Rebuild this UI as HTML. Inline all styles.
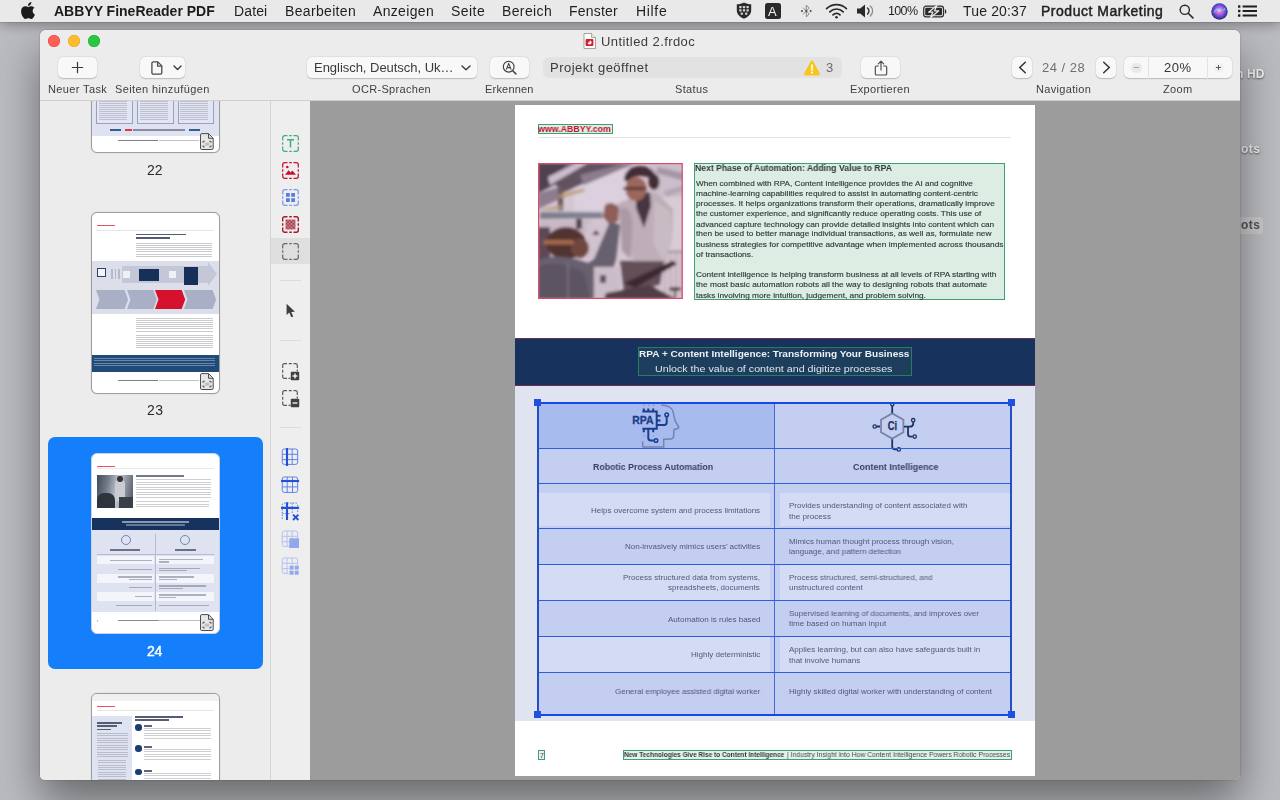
<!DOCTYPE html>
<html lang="de"><head><meta charset="utf-8"><title>ABBYY FineReader PDF – Untitled 2.frdoc</title>
<style>
html,body{margin:0;padding:0}
body{width:1280px;height:800px;overflow:hidden;position:relative;background:#a9aaae;font-family:"Liberation Sans",sans-serif;color:#2b2b2b}
div,span,svg{position:absolute;box-sizing:border-box}
.t{white-space:nowrap;line-height:1;display:block;will-change:transform}
#desktop{left:0;top:0;width:1280px;height:800px;background:#bbbcc0}
#menubar{left:0;top:0;width:1280px;height:22px;background:#e9e9e9;box-shadow:0 1px 0 rgba(0,0,0,.10),0 2px 14px rgba(0,0,0,.36);color:#1f1f1f}
#winshadow{left:40px;top:30px;width:1200px;height:750px;border-radius:6px;box-shadow:0 22px 45px rgba(0,0,0,.44),0 0 1.500px rgba(0,0,0,.45)}
#window{left:40px;top:30px;width:1200px;height:750px;border-radius:6px 6px 5px 5px;overflow:hidden;background:#ececec}
#toolbar{left:0;top:0;width:1200px;height:71px;background:#ececec;border-bottom:1px solid #cfcfcf}
#sidebar{left:0;top:71px;width:231px;height:679px;background:#ececec;border-right:1px solid #d4d4d4;overflow:hidden}
#tools{left:231px;top:71px;width:39px;height:679px;background:#eeeeee}
#main{left:270px;top:71px;width:930px;height:679px;background:#9c9c9c;overflow:hidden}
#page{left:205px;top:3.5px;width:520px;height:671px;background:#fff}
.btn{background:#f8f8f8;border-radius:5px;box-shadow:0 0 0 .5px rgba(0,0,0,.045),0 .6px 1.200px rgba(0,0,0,.2)}
.lbl{color:#3a3a3a}
#page .t{filter:blur(.3px)}

</style></head>
<body>
<div id="desktop">
<div style="left:1234px;top:217px;width:29px;height:16.5px;background:rgba(205,205,207,.85);border-radius:3px"></div>
<span class="t" id="t0" style="left:1235.78px;top:68.00px;font-size:12px;font-weight:700;color:#f4f4f4;letter-spacing:0.133px;text-shadow:0 1px 2px rgba(0,0,0,.55);">n HD</span>
<span class="t" id="t1" style="left:1240.58px;top:143.00px;font-size:12px;font-weight:700;color:#f4f4f4;letter-spacing:0.450px;text-shadow:0 1px 2px rgba(0,0,0,.55);">ots</span>
<span class="t" id="t2" style="left:1240.58px;top:219.00px;font-size:12px;font-weight:700;color:#555;letter-spacing:0.450px;">ots</span>
</div>
<div id="winshadow"></div>
<div id="menubar">
<svg style="left:20.5px;top:2px" width="14" height="17" viewBox="0 0 814 1000"><path fill="#1d1d1d" d="M788 341c-6 4-108 62-108 190 0 149 131 201 135 203-1 3-21 72-69 142-43 62-88 124-156 124s-86-40-165-40c-77 0-104 41-167 41s-106-57-156-128C44 790 0 663 0 543c0-194 126-296 250-296 66 0 121 43 162 43 39 0 101-46 176-46 28 0 130 3 197 97zM555 160c31-37 53-88 53-139 0-7-1-14-2-20-50 2-110 33-146 75-28 32-55 83-55 135 0 8 1 16 2 18 3 1 8 1 13 1 45 0 102-30 135-70z"/></svg>
<span class="t" id="t3" style="left:54.16px;top:4.00px;font-size:14px;font-weight:700;color:#1b1b1b;letter-spacing:-0.004px;">ABBYY FineReader PDF</span>
<span class="t" id="t4" style="left:233.66px;top:4.00px;font-size:14px;color:#1f1f1f;letter-spacing:0.128px;">Datei</span>
<span class="t" id="t5" style="left:285.16px;top:4.00px;font-size:14px;color:#1f1f1f;letter-spacing:0.331px;">Bearbeiten</span>
<span class="t" id="t6" style="left:373.16px;top:4.00px;font-size:14px;color:#1f1f1f;letter-spacing:0.330px;">Anzeigen</span>
<span class="t" id="t7" style="left:451.16px;top:4.00px;font-size:14px;color:#1f1f1f;letter-spacing:0.445px;">Seite</span>
<span class="t" id="t8" style="left:502.16px;top:4.00px;font-size:14px;color:#1f1f1f;letter-spacing:0.372px;">Bereich</span>
<span class="t" id="t9" style="left:569.16px;top:4.00px;font-size:14px;color:#1f1f1f;letter-spacing:0.205px;">Fenster</span>
<span class="t" id="t10" style="left:636.16px;top:4.00px;font-size:14px;color:#1f1f1f;letter-spacing:0.671px;">Hilfe</span>
<svg style="left:735.5px;top:2px" width="16" height="17" viewBox="0 0 16 17"><path d="M8 .4c2 1.2 4.6 1.8 7.2 1.9v5.9c0 4-2.800 6.800-7.200 8.500C3.600 15 .8 12.200.8 8.200V2.300C3.400 2.200 6 1.600 8 .4z" fill="#2a2a2a"/><g fill="#dcdcdc"><rect x="3.300" y="4" width="2.200" height="2.200" rx=".4"/><rect x="6.900" y="4" width="2.200" height="2.200" rx=".4"/><rect x="10.500" y="4" width="2.200" height="2.200" rx=".4"/><rect x="3.300" y="7.300" width="2.200" height="2.200" rx=".4"/><rect x="6.900" y="7.300" width="2.200" height="2.200" rx=".4"/><rect x="10.500" y="7.300" width="2.200" height="2.200" rx=".4"/><rect x="4.700" y="10.600" width="2.200" height="2.200" rx=".4"/><rect x="9.100" y="10.600" width="2.200" height="2.200" rx=".4"/></g></svg>
<div style="left:765px;top:3px;width:16px;height:16px;background:#2a2a2a;border-radius:2.5px"></div>
<span class="t" id="t11" style="left:768.22px;top:5.00px;font-size:13px;color:#f2f2f2;letter-spacing:-0.022px;">A</span>
<svg style="left:799px;top:3px" width="15" height="16" viewBox="0 0 15 16"><path d="M4 4.700l6.200 6.200L7.300 14V2l2.900 3.100L4 11.300" fill="none" stroke="#8a8a8a" stroke-width="1" stroke-linejoin="round"/><circle cx="3" cy="8" r="1" fill="#444"/><circle cx="7.300" cy="8" r="1" fill="#444"/><circle cx="11.600" cy="8" r="1" fill="#444"/></svg>
<svg style="left:825px;top:3px" width="23" height="16" viewBox="0 0 23 16"><g fill="none" stroke="#2a2a2a" stroke-width="1.700" stroke-linecap="round"><path d="M1.600 5.600C4.300 3 7.700 1.600 11.500 1.600s7.200 1.400 9.900 4"/><path d="M4.800 8.800c1.800-1.800 4.100-2.800 6.700-2.800s4.900 1 6.700 2.800"/><path d="M8 11.800c.9-.9 2.100-1.500 3.500-1.500s2.600.6 3.500 1.500"/></g><circle cx="11.500" cy="14.300" r="1.300" fill="#2a2a2a"/></svg>
<svg style="left:856px;top:3px" width="19" height="16" viewBox="0 0 19 16"><path d="M1 5.500h3.200L9 1.500v13l-4.800-4H1z" fill="#2a2a2a"/><path d="M11.500 5c1 .8 1.500 1.800 1.500 3s-.5 2.200-1.500 3" fill="none" stroke="#2a2a2a" stroke-width="1.300" stroke-linecap="round"/><path d="M14.300 3c1.500 1.300 2.300 3 2.300 5s-.8 3.700-2.300 5" fill="none" stroke="#8a8a8a" stroke-width="1.300" stroke-linecap="round"/></svg>
<span class="t" id="t12" style="left:887.65px;top:5.00px;font-size:12.5px;color:#1f1f1f;letter-spacing:-0.653px;">100%</span>
<svg style="left:923px;top:4.500px" width="24" height="13" viewBox="0 0 24 13"><rect x=".7" y="1.200" width="19.800" height="10.600" rx="2.300" fill="none" stroke="#2a2a2a" stroke-width="1.200"/><path d="M21.900 4.300c1 .3 1.400 1.100 1.400 2.200s-.4 1.900-1.400 2.200z" fill="#2a2a2a"/><rect x="2.200" y="2.700" width="16.800" height="7.600" rx="1" fill="#2a2a2a"/><path d="M13.800 .6L5.600 7.200h4.300L7.600 12.400l8.200-6.600h-4.300z" fill="#2a2a2a" stroke="#e9e9e9" stroke-width="1.300" stroke-linejoin="round"/></svg>
<span class="t" id="t13" style="left:963.36px;top:4.00px;font-size:14px;color:#1f1f1f;letter-spacing:0.159px;">Tue 20:37</span>
<span class="t" id="t14" style="left:1040.66px;top:4.00px;font-size:14px;color:#222;letter-spacing:0.518px;-webkit-text-stroke:.45px #222;">Product Marketing</span>
<svg style="left:1179px;top:3.500px" width="15" height="15" viewBox="0 0 15 15"><circle cx="5.800" cy="5.800" r="4.600" fill="none" stroke="#2a2a2a" stroke-width="1.400"/><path d="M9.200 9.200l4.700 4.700" stroke="#2a2a2a" stroke-width="1.600" stroke-linecap="round"/></svg>
<svg style="left:1210.500px;top:2.500px" width="17" height="17" viewBox="0 0 17 17"><defs><radialGradient id="siri" cx=".5" cy=".45" r=".6"><stop offset="0" stop-color="#f3e6ff"/><stop offset=".3" stop-color="#c46be8"/><stop offset=".6" stop-color="#5a4fd8"/><stop offset="1" stop-color="#1a1a4a"/></radialGradient></defs><circle cx="8.500" cy="8.500" r="8.200" fill="url(#siri)"/><path d="M3 9.500c2-3 3.500-4.500 5.500-2.500s3.500 1 5.500-1.500" fill="none" stroke="#5ee0ff" stroke-width="1.300" opacity=".85"/><path d="M3.500 8c2 1 3.500 3.500 5.500 1.500s3-2.500 4.500-2" fill="none" stroke="#ff5ea8" stroke-width="1.200" opacity=".8"/></svg>
<svg style="left:1238px;top:5px" width="19" height="12" viewBox="0 0 19 12"><g fill="#1f1f1f"><rect x="0" y=".3" width="2.400" height="2.400" rx=".5"/><rect x="4.600" y=".5" width="14.400" height="2"/><rect x="0" y="4.800" width="2.400" height="2.400" rx=".5"/><rect x="4.600" y="5" width="14.400" height="2"/><rect x="0" y="9.300" width="2.400" height="2.400" rx=".5"/><rect x="4.600" y="9.500" width="14.400" height="2"/></g></svg>
</div>
<div id="window">
<div id="toolbar">
<div style="left:7.8px;top:4.9px;width:12.4px;height:12.4px;background:#fe5f57;border-radius:50%;box-shadow:inset 0 0 0 .5px #e2463f"></div>
<div style="left:27.8px;top:4.9px;width:12.4px;height:12.4px;background:#febc2e;border-radius:50%;box-shadow:inset 0 0 0 .5px #dfa023"></div>
<div style="left:47.8px;top:4.9px;width:12.4px;height:12.4px;background:#28c840;border-radius:50%;box-shadow:inset 0 0 0 .5px #1dad2b"></div>
<svg style="left:543px;top:3px" width="13" height="16" viewBox="0 0 13 16"><path d="M1 .5h7.500L12.500 4.500V15.500H1z" fill="#fff" stroke="#8e8e8e" stroke-width=".8"/><path d="M8.500 .5V4.500h4" fill="#e8e8e8" stroke="#8e8e8e" stroke-width=".7"/><rect x="2.600" y="6" width="7.800" height="7" rx="1" fill="#d0202e"/><path d="M4.600 9.500a2 2 0 1 0 2-2v2z" fill="#fff"/></svg>
<span class="t" id="t15" style="left:561.12px;top:5.00px;font-size:13px;color:#3c3c3c;letter-spacing:0.421px;">Untitled 2.frdoc</span>
<div class="btn" style="left:18px;top:27px;width:39px;height:21px;"><svg style="left:13px;top:4px" width="13" height="13" viewBox="0 0 13 13"><path d="M6.500 1.300v10.400M1.300 6.500h10.400" stroke="#3a3a3a" stroke-width="1.200" stroke-linecap="round"/></svg></div>
<div class="btn" style="left:100px;top:27px;width:45px;height:21px;"><svg style="left:11px;top:3.500px" width="12" height="14" viewBox="0 0 12 14"><path d="M2.300 .9h4.500l4 4v6.800a1.400 1.400 0 0 1-1.400 1.400H2.300A1.400 1.400 0 0 1 .9 11.700V2.300A1.400 1.400 0 0 1 2.300 .9z" fill="none" stroke="#4a4a4a" stroke-width="1.300" stroke-linejoin="round"/><path d="M6.600 1v4.100h4.100" fill="none" stroke="#4a4a4a" stroke-width="1.300" stroke-linejoin="round"/></svg><svg style="left:33px;top:8px" width="9" height="6" viewBox="0 0 9 6"><path d="M1 1l3.500 3.500L8 1" fill="none" stroke="#3a3a3a" stroke-width="1.400" stroke-linecap="round" stroke-linejoin="round"/></svg></div>
<div class="btn" style="left:267px;top:27px;width:170px;height:21px;"><svg style="left:154px;top:8px" width="10" height="6" viewBox="0 0 10 6"><path d="M1 1l4 3.800L9 1" fill="none" stroke="#3a3a3a" stroke-width="1.400" stroke-linecap="round" stroke-linejoin="round"/></svg></div>
<span class="t" id="t16" style="left:274.42px;top:31.00px;font-size:13px;color:#3a3a3a;letter-spacing:-0.034px;">Englisch, Deutsch, Uk…</span>
<div class="btn" style="left:450px;top:27px;width:39px;height:21px;"><svg style="left:12px;top:3px" width="15" height="15" viewBox="0 0 15 15"><circle cx="6.700" cy="6.700" r="5.400" fill="none" stroke="#444" stroke-width="1.200"/><path d="M10.700 10.700l3.200 3.200" stroke="#444" stroke-width="1.500" stroke-linecap="round"/><path d="M4.300 9.600L6.700 3.400l2.400 6.200M5.200 7.600h3" fill="none" stroke="#444" stroke-width="1.100" stroke-linejoin="round"/></svg></div>
<div style="left:502.5px;top:26.6px;width:299.5px;height:21.8px;background:#e2e2e2;border-radius:6px"></div>
<span class="t" id="t17" style="left:509.82px;top:31.00px;font-size:13px;color:#3a3a3a;letter-spacing:0.481px;">Projekt geöffnet</span>
<svg style="left:763px;top:29px" width="18" height="18" viewBox="0 0 18 18"><path d="M9 1.600c.6 0 1.100.3 1.400.9l6.300 11.700c.6 1.100-.1 2.300-1.400 2.300H2.700c-1.300 0-2-1.200-1.400-2.300L7.600 2.500c.3-.6.800-.9 1.400-.9z" fill="#f8c51c"/><path d="M9 6v5" stroke="#fff" stroke-width="1.700" stroke-linecap="round"/><circle cx="9" cy="13.600" r="1.050" fill="#fff"/></svg>
<span class="t" id="t18" style="left:786.22px;top:31.00px;font-size:13px;color:#6a6a6a;letter-spacing:0.216px;">3</span>
<div class="btn" style="left:821px;top:27px;width:39px;height:21px;"><svg style="left:12.500px;top:2.500px" width="14" height="16" viewBox="0 0 14 16"><path d="M4.300 6H2.600A1.300 1.300 0 0 0 1.300 7.300v6.400A1.300 1.300 0 0 0 2.600 15h8.800a1.300 1.300 0 0 0 1.300-1.300V7.300A1.300 1.300 0 0 0 11.400 6H9.700" fill="none" stroke="#4a4a4a" stroke-width="1.150" stroke-linecap="round"/><path d="M7 10V1.300M4.300 3.800L7 1.100l2.700 2.700" fill="none" stroke="#4a4a4a" stroke-width="1.150" stroke-linecap="round" stroke-linejoin="round"/></svg></div>
<div class="btn" style="left:972px;top:27px;width:20.3px;height:21px;"><svg style="left:5.500px;top:4px" width="9" height="13" viewBox="0 0 9 13"><path d="M7.300 1.200L1.700 6.500l5.600 5.300" fill="none" stroke="#333" stroke-width="1.500" stroke-linecap="round" stroke-linejoin="round"/></svg></div>
<span class="t" id="t19" style="left:1002.02px;top:31.00px;font-size:13px;color:#707070;letter-spacing:0.514px;">24 / 28</span>
<div class="btn" style="left:1056px;top:27px;width:20.3px;height:21px;"><svg style="left:6px;top:4px" width="9" height="13" viewBox="0 0 9 13"><path d="M1.700 1.200l5.600 5.300-5.600 5.300" fill="none" stroke="#333" stroke-width="1.500" stroke-linecap="round" stroke-linejoin="round"/></svg></div>
<div class="btn" style="left:1084px;top:27px;width:108px;height:21px;"><div style="left:24px;top:0;width:1px;height:21.500px;background:#e3e3e3"></div><div style="left:83px;top:0;width:1px;height:21.500px;background:#e3e3e3"></div><div style="left:7px;top:5.500px;width:10.500px;height:10.500px;border-radius:50%;background:#e9e9e9"></div><div style="left:9.700px;top:10.200px;width:5px;height:1.200px;background:#a4a4a4"></div><div style="left:89.500px;top:5.500px;width:10.500px;height:10.500px;border-radius:50%;background:#f0f0f0"></div><div style="left:92px;top:10.200px;width:5.400px;height:1.100px;background:#5c5c5c"></div><div style="left:94.150px;top:8.050px;width:1.100px;height:5.400px;background:#5c5c5c"></div></div>
<span class="t" id="t20" style="left:1123.92px;top:31.00px;font-size:13px;color:#333;letter-spacing:0.459px;">20%</span>
<span class="t" id="t21" style="left:7.64px;top:54.00px;font-size:11px;color:#404040;letter-spacing:0.379px;">Neuer Task</span>
<span class="t" id="t22" style="left:74.94px;top:54.00px;font-size:11px;color:#404040;letter-spacing:0.392px;">Seiten hinzufügen</span>
<span class="t" id="t23" style="left:312.14px;top:54.00px;font-size:11px;color:#404040;letter-spacing:0.322px;">OCR-Sprachen</span>
<span class="t" id="t24" style="left:444.64px;top:54.00px;font-size:11px;color:#404040;letter-spacing:0.194px;">Erkennen</span>
<span class="t" id="t25" style="left:634.94px;top:54.00px;font-size:11px;color:#404040;letter-spacing:0.352px;">Status</span>
<span class="t" id="t26" style="left:810.34px;top:54.00px;font-size:11px;color:#404040;letter-spacing:0.328px;">Exportieren</span>
<span class="t" id="t27" style="left:996.04px;top:54.00px;font-size:11px;color:#404040;letter-spacing:0.318px;">Navigation</span>
<span class="t" id="t28" style="left:1123.04px;top:54.00px;font-size:11px;color:#404040;letter-spacing:0.342px;">Zoom</span>
</div>
<div id="sidebar">
<div style="left:51px;top:-129.5px;width:128.5px;height:181.5px;background:#fff;border:1px solid #9d9d9d;border-radius:6px;overflow:hidden;box-shadow:0 0 1px rgba(0,0,0,.25)"><div style="left:0;top:0;width:128px;height:163.5px;background:#dfe2f0"></div><div style="left:4.4px;top:87.5px;width:36.2px;height:64px;border:1px solid #9aa1bd;background:#e3e6f2"></div><div style="left:6.9px;top:128.5px;width:27.7px;height:20px;opacity:0.341;background:repeating-linear-gradient(180deg,#6f7590 0,#6f7590 1.0px,transparent 1.0px,transparent 2.0px)"></div><div style="left:45.4px;top:87.5px;width:36.2px;height:64px;border:1px solid #9aa1bd;background:#e3e6f2"></div><div style="left:47.9px;top:128.5px;width:27.7px;height:20px;opacity:0.341;background:repeating-linear-gradient(180deg,#6f7590 0,#6f7590 1.0px,transparent 1.0px,transparent 2.0px)"></div><div style="left:85.6px;top:87.5px;width:36px;height:64px;border:1px solid #9aa1bd;background:#e3e6f2"></div><div style="left:88.1px;top:128.5px;width:27.5px;height:20px;opacity:0.341;background:repeating-linear-gradient(180deg,#6f7590 0,#6f7590 1.0px,transparent 1.0px,transparent 2.0px)"></div><div style="left:18px;top:156.8px;width:11px;height:1.600px;background:#2f5d94"></div><div style="left:97px;top:156.8px;width:11px;height:1.600px;background:#2f5d94"></div><div style="left:33px;top:156.6px;width:7px;height:1.800px;background:#e0344a"></div><div style="left:41px;top:156.8px;width:52px;height:1.500px;background:#70768c;opacity:.8"></div><div style="left:26px;top:167.1px;width:40px;height:1.200px;background:#555;opacity:.75"></div><div style="left:67px;top:167.1px;width:40px;height:1.200px;background:#999;opacity:.6"></div><svg style="left:107.5px;top:160.0px" width="14" height="17" viewBox="0 0 14 17"><path d="M1.800 .6h6.700l4.700 4.700v9.900a1.300 1.300 0 0 1-1.300 1.300H1.800A1.300 1.300 0 0 1 .5 15.200V1.900A1.300 1.300 0 0 1 1.800 .6z" fill="#e4e4e4" fill-opacity=".9" stroke="#4d4d4d" stroke-width="1"/><path d="M8.500 .8v4.500h4.500" fill="none" stroke="#4d4d4d" stroke-width="1"/><path d="M3 9.800V8.300h1.700M9.300 8.300H11v1.500M11 12.400v1.500H9.300M4.700 13.900H3v-1.500" fill="none" stroke="#4d4d4d" stroke-width="1"/><rect x="4.700" y="9.600" width="4.600" height="3" fill="#9a9a9a" opacity=".5"/></svg></div>
<span class="t" id="t29" style="left:106.76px;top:62.00px;font-size:14px;color:#2a2a2a;letter-spacing:-0.078px;">22</span>
<div style="left:51px;top:111px;width:128.5px;height:181.5px;background:#fff;border:1px solid #9d9d9d;border-radius:6px;overflow:hidden;box-shadow:0 0 1px rgba(0,0,0,.25)"><div style="left:4.9px;top:12px;width:17.9px;height:1.3px;background:#e0344a;opacity:.85"></div><div style="left:3.8px;top:16.5px;width:118.2px;height:0.5px;background:#e6e6e6;"></div><div style="left:43.5px;top:20.6px;width:50.8px;height:1.6px;background:#565c72;"></div><div style="left:43.5px;top:24px;width:34.5px;height:1.6px;background:#565c72;"></div><div style="left:43.5px;top:30px;width:76.5px;height:14.5px;opacity:0.46499999999999997;background:repeating-linear-gradient(180deg,#8d8f99 0,#8d8f99 1.0px,transparent 1.0px,transparent 2.1px)"></div><div style="left:-1px;top:48px;width:129px;height:52.5px;background:#dcdeea;"></div><div style="left:30px;top:52.5px;width:86px;height:17.5px;background:#c3c7d8;"></div><svg style="left:116px;top:49px" width="10" height="24" viewBox="0 0 10 24"><path d="M0 0l9 12-9 12z" fill="#c3c7d8"/></svg><div style="left:5px;top:55px;width:9px;height:9px;background:#f4f5f9;border:1px solid #2a436e"></div><div style="left:19px;top:56px;width:1.5px;height:10px;background:#b5bacd;"></div><div style="left:22.5px;top:56px;width:1.5px;height:10px;background:#b5bacd;"></div><div style="left:26px;top:56px;width:1.5px;height:10px;background:#b5bacd;"></div><div style="left:30.5px;top:57.5px;width:7px;height:7.5px;background:#f0f1f6;"></div><div style="left:47px;top:56px;width:20px;height:12px;background:#17305a;"></div><div style="left:76.5px;top:57.5px;width:7px;height:7.5px;background:#f0f1f6;"></div><div style="left:92px;top:53.7px;width:14.4px;height:18.6px;background:#17305a;"></div><svg style="left:4.4px;top:76.6px" width="32.6" height="19" viewBox="0 0 32.6 19"><path d="M0 0H28.6L32.1 9.500 28.6 19H0L3.500 9.500z" fill="#a9afc4"/></svg><svg style="left:35px;top:76.6px" width="30.3" height="19" viewBox="0 0 30.3 19"><path d="M0 0H26.3L29.8 9.500 26.3 19H0L3.500 9.500z" fill="#a9afc4"/></svg><svg style="left:63.3px;top:76.6px" width="30.7" height="19" viewBox="0 0 30.7 19"><path d="M0 0H26.7L30.2 9.500 26.7 19H0L3.500 9.500z" fill="#d6112e"/></svg><svg style="left:92px;top:76.6px" width="32.6" height="19" viewBox="0 0 32.6 19"><path d="M0 0H28.6L32.1 9.500 28.6 19H0L3.500 9.500z" fill="#a9afc4"/></svg><div style="left:43.5px;top:104.8px;width:77.5px;height:31.6px;opacity:0.46499999999999997;background:repeating-linear-gradient(180deg,#8d8f99 0,#8d8f99 1.0px,transparent 1.0px,transparent 2.1px)"></div><div style="left:43.5px;top:119.3px;width:77.5px;height:2.3px;background:#fff;"></div><div style="left:-1px;top:142px;width:129px;height:17.4px;background:#1f4a7a;"></div><div style="left:2px;top:145px;width:121px;height:8px;opacity:0.434;background:repeating-linear-gradient(180deg,#c9d6e6 0,#c9d6e6 1.0px,transparent 1.0px,transparent 2.3px)"></div><div style="left:26px;top:167px;width:40px;height:1.2px;background:#555;opacity:.75"></div><div style="left:67px;top:167px;width:40px;height:1.2px;background:#999;opacity:.6"></div><svg style="left:107.5px;top:159.5px" width="14" height="17" viewBox="0 0 14 17"><path d="M1.800 .6h6.700l4.700 4.700v9.900a1.300 1.300 0 0 1-1.300 1.300H1.800A1.300 1.300 0 0 1 .5 15.200V1.900A1.300 1.300 0 0 1 1.800 .6z" fill="#e4e4e4" fill-opacity=".9" stroke="#4d4d4d" stroke-width="1"/><path d="M8.500 .8v4.500h4.500" fill="none" stroke="#4d4d4d" stroke-width="1"/><path d="M3 9.800V8.300h1.700M9.300 8.300H11v1.500M11 12.400v1.500H9.300M4.700 13.900H3v-1.500" fill="none" stroke="#4d4d4d" stroke-width="1"/><rect x="4.700" y="9.600" width="4.600" height="3" fill="#9a9a9a" opacity=".5"/></svg></div>
<span class="t" id="t30" style="left:106.66px;top:302.00px;font-size:14px;color:#2a2a2a;letter-spacing:0.422px;">23</span>
<div style="left:8px;top:335.5px;width:214.5px;height:232.5px;background:#157efb;border-radius:7px"></div>
<div style="left:51px;top:351.5px;width:128.7px;height:181.5px;background:#fff;border:1px solid #c9d3e6;border-radius:6px;overflow:hidden"><div style="left:4.94px;top:12px;width:17.82px;height:1.3px;background:#e0344a;opacity:.85"></div><div style="left:4.6925px;top:14.5437px;width:117.067px;height:0.495px;background:#e9e9e9;"></div><div style="left:4.69px;top:21.10px;width:35.89px;height:33.54px;overflow:hidden;background:linear-gradient(100deg,#3f4a58 0%,#76808c 30%,#c4c8d0 55%,#8a909c 75%,#4c535f 100%)"><div style="left:0;top:18.44px;width:17.94px;height:16.77px;background:#2e333d;border-radius:7px 7px 0 0"></div><div style="left:17.94px;top:4.02px;width:10.77px;height:23.48px;background:#c9ccd3;border-radius:5px"></div><div style="left:20.10px;top:1.01px;width:6px;height:6.500px;background:#3a3236;border-radius:50%"></div><div style="left:22.25px;top:22.13px;width:14.36px;height:13.41px;background:#3a3f49"></div></div><div style="left:43.7975px;top:21.5975px;width:48.51px;height:1.485px;background:#5a6074;opacity:.85"></div><div style="left:43.7975px;top:25.0625px;width:75.24px;height:19.4287px;opacity:0.434;background:repeating-linear-gradient(180deg,#8d8f99 0,#8d8f99 1.1px,transparent 1.1px,transparent 2.512125px)"></div><div style="left:43.7975px;top:47.7088px;width:72.765px;height:6.93px;opacity:0.434;background:repeating-linear-gradient(180deg,#8d8f99 0,#8d8f99 1.1px,transparent 1.1px,transparent 2.512125px)"></div><div style="left:-1px;top:64.1923px;width:128.7px;height:11.979px;background:#17325c;"></div><div style="left:29.9375px;top:67.2613px;width:66.825px;height:1.85625px;background:#e8ecf4;opacity:.55"></div><div style="left:33.8975px;top:70.9737px;width:58.6575px;height:1.60875px;background:#c6cfe0;opacity:.45"></div><div style="left:-1px;top:76.1712px;width:128.7px;height:82.8383px;background:#dfe2f0;"></div><div style="left:4.94px;top:102.555px;width:57.1725px;height:8.39025px;background:#f4f5fa;"></div><div style="left:64.4885px;top:102.555px;width:57.024px;height:8.39025px;background:#f4f5fa;"></div><div style="left:4.94px;top:120.474px;width:57.1725px;height:8.78625px;background:#f4f5fa;"></div><div style="left:64.4885px;top:120.474px;width:57.024px;height:8.78625px;background:#f4f5fa;"></div><div style="left:4.94px;top:138.294px;width:57.1725px;height:8.78625px;background:#f4f5fa;"></div><div style="left:64.4885px;top:138.294px;width:57.024px;height:8.78625px;background:#f4f5fa;"></div><div style="left:62.9787px;top:80.3787px;width:0.61875px;height:77.0963px;background:#b4bbd4;"></div><div style="left:4.6925px;top:100.055px;width:117.067px;height:0.61875px;background:#b4bbd4;"></div><div style="left:28.95px;top:81.12px;width:9.90px;height:9.90px;border:1.200px solid #4868a4;border-radius:50%;opacity:.75"></div><div style="left:87.85px;top:81.12px;width:9.90px;height:9.90px;border:1.200px solid #4868a4;border-radius:50%;opacity:.75"></div><div style="left:18.4783px;top:95.4762px;width:29.601px;height:1.7325px;background:#4f566c;opacity:.8"></div><div style="left:82.9025px;top:95.4762px;width:21.0375px;height:1.7325px;background:#4f566c;opacity:.8"></div><div style="left:17.9585px;top:106.366px;width:41.7532px;height:1.2375px;background:#7d8296;opacity:.6"></div><div style="left:26.3735px;top:115.276px;width:33.3382px;height:1.2375px;background:#7d8296;opacity:.6"></div><div style="left:25.9033px;top:122.949px;width:33.8085px;height:1.2375px;background:#7d8296;opacity:.6"></div><div style="left:37.0902px;top:125.424px;width:22.6215px;height:1.2375px;background:#7d8296;opacity:.6"></div><div style="left:36.8922px;top:133.344px;width:22.8195px;height:1.2375px;background:#7d8296;opacity:.6"></div><div style="left:42.758px;top:142.006px;width:16.9538px;height:1.2375px;background:#7d8296;opacity:.6"></div><div style="left:23.8985px;top:151.164px;width:35.8132px;height:1.2375px;background:#7d8296;opacity:.6"></div><div style="left:66.914px;top:105.129px;width:43.956px;height:1.2375px;background:#7d8296;opacity:.6"></div><div style="left:66.914px;top:107.851px;width:10.296px;height:1.2375px;background:#7d8296;opacity:.6"></div><div style="left:66.914px;top:114.039px;width:40.7385px;height:1.2375px;background:#7d8296;opacity:.6"></div><div style="left:66.914px;top:116.514px;width:27.621px;height:1.2375px;background:#7d8296;opacity:.6"></div><div style="left:66.914px;top:122.949px;width:35.4173px;height:1.2375px;background:#7d8296;opacity:.6"></div><div style="left:66.914px;top:125.424px;width:18.1418px;height:1.2375px;background:#7d8296;opacity:.6"></div><div style="left:66.914px;top:131.859px;width:46.926px;height:1.2375px;background:#7d8296;opacity:.6"></div><div style="left:66.914px;top:134.334px;width:23.9828px;height:1.2375px;background:#7d8296;opacity:.6"></div><div style="left:66.914px;top:140.769px;width:47.2477px;height:1.2375px;background:#7d8296;opacity:.6"></div><div style="left:66.914px;top:143.491px;width:17.4735px;height:1.2375px;background:#7d8296;opacity:.6"></div><div style="left:66.914px;top:151.164px;width:50.1188px;height:1.2375px;background:#7d8296;opacity:.6"></div><div style="left:26.1755px;top:166.756px;width:39.5753px;height:1.2375px;background:#555;opacity:.7"></div><div style="left:66.4933px;top:166.756px;width:55.143px;height:1.2375px;background:#888;opacity:.55"></div><div style="left:4.76675px;top:166.509px;width:1.65825px;height:1.7325px;background:#888;opacity:.5"></div><svg style="left:107.5px;top:160.0px" width="14" height="17" viewBox="0 0 14 17"><path d="M1.800 .6h6.700l4.700 4.700v9.900a1.300 1.300 0 0 1-1.300 1.300H1.800A1.300 1.300 0 0 1 .5 15.200V1.900A1.300 1.300 0 0 1 1.800 .6z" fill="#e4e4e4" fill-opacity=".9" stroke="#4d4d4d" stroke-width="1"/><path d="M8.500 .8v4.500h4.500" fill="none" stroke="#4d4d4d" stroke-width="1"/><path d="M3 9.800V8.300h1.700M9.300 8.300H11v1.500M11 12.400v1.500H9.300M4.700 13.900H3v-1.500" fill="none" stroke="#4d4d4d" stroke-width="1"/><rect x="4.700" y="9.600" width="4.600" height="3" fill="#9a9a9a" opacity=".5"/></svg></div>
<span class="t" id="t31" style="left:106.96px;top:543.00px;font-size:14px;color:#ffffff;letter-spacing:-0.278px;-webkit-text-stroke:.4px #fff;">24</span>
<div style="left:51px;top:592.4px;width:128.5px;height:181.5px;background:#fff;border:1px solid #9d9d9d;border-radius:6px;overflow:hidden;box-shadow:0 0 1px rgba(0,0,0,.25)"><div style="left:-1px;top:-1.4px;width:129px;height:7.5px;background:#f0f0f0;"></div><div style="left:4.9px;top:11.8px;width:17.9px;height:1.3px;background:#e0344a;opacity:.85"></div><div style="left:4.6px;top:16.1px;width:117.4px;height:0.5px;background:#e6e6e6;"></div><div style="left:0px;top:21.4px;width:39.6px;height:74.2px;background:#dfe2f0;"></div><div style="left:4.6px;top:27.6px;width:25.4px;height:1.6px;background:#565c72;"></div><div style="left:4.6px;top:31px;width:20.4px;height:1.6px;background:#565c72;"></div><div style="left:4.6px;top:34.4px;width:14.4px;height:1.6px;background:#565c72;"></div><div style="left:4.6px;top:39.1px;width:31.4px;height:24.5px;opacity:0.46499999999999997;background:repeating-linear-gradient(180deg,#8d90a0 0,#8d90a0 1.0px,transparent 1.0px,transparent 2.35px)"></div><div style="left:6px;top:66.1px;width:28px;height:19.5px;opacity:0.46499999999999997;background:repeating-linear-gradient(180deg,#8d90a0 0,#8d90a0 1.0px,transparent 1.0px,transparent 2.35px)"></div><div style="left:43px;top:21.6px;width:48px;height:1.7px;background:#565c72;"></div><div style="left:43px;top:25.1px;width:34px;height:1.7px;background:#565c72;"></div><div style="left:43.3px;top:29.8px;width:6.600px;height:6.600px;border-radius:50%;background:#1b3c6e"></div><div style="left:52px;top:31.1px;width:8px;height:1.3px;background:#5f657a;"></div><div style="left:52px;top:34.1px;width:67px;height:12px;opacity:0.434;background:repeating-linear-gradient(180deg,#8d8f99 0,#8d8f99 1.0px,transparent 1.0px,transparent 2.4px)"></div><div style="left:43.3px;top:51px;width:6.600px;height:6.600px;border-radius:50%;background:#1b3c6e"></div><div style="left:52px;top:52.1px;width:8px;height:1.3px;background:#5f657a;"></div><div style="left:52px;top:55.1px;width:67px;height:12px;opacity:0.434;background:repeating-linear-gradient(180deg,#8d8f99 0,#8d8f99 1.0px,transparent 1.0px,transparent 2.4px)"></div><div style="left:43.3px;top:74.3px;width:6.600px;height:6.600px;border-radius:50%;background:#1b3c6e"></div><div style="left:52px;top:76.1px;width:8px;height:1.3px;background:#5f657a;"></div><div style="left:52px;top:79.1px;width:67px;height:12px;opacity:0.434;background:repeating-linear-gradient(180deg,#8d8f99 0,#8d8f99 1.0px,transparent 1.0px,transparent 2.4px)"></div></div>
</div>
<div id="tools">
<div style="left:0px;top:137px;width:39px;height:26.4px;background:#dfdfdf"></div>
<svg style="left:11px;top:33.5px" width="17" height="17" viewBox="0 0 17 17"><path d="M.7 5.500V2.700a2 2 0 0 1 2-2H5.500M11.500 .7h2.800a2 2 0 0 1 2 2V5.500M16.300 11.500v2.800a2 2 0 0 1-2 2H11.500M5.500 16.300H2.700a2 2 0 0 1-2-2V11.500M7.200 .7h2.600M7.200 16.300h2.600M.7 7.200v2.600M16.300 7.200v2.600" fill="none" stroke="#3fae7c" stroke-width="1.25"/><path d="M5 4.800h7M8.500 4.800v7.700" fill="none" stroke="#3fae7c" stroke-width="1.500"/></svg>
<svg style="left:11px;top:60.5px" width="17" height="17" viewBox="0 0 17 17"><path d="M.7 5.500V2.700a2 2 0 0 1 2-2H5.500M11.500 .7h2.800a2 2 0 0 1 2 2V5.500M16.300 11.500v2.800a2 2 0 0 1-2 2H11.500M5.500 16.300H2.700a2 2 0 0 1-2-2V11.500M7.200 .7h2.600M7.200 16.300h2.600M.7 7.200v2.600M16.300 7.200v2.600" fill="none" stroke="#c8102e" stroke-width="1.25"/><circle cx="5.300" cy="5" r="1.300" fill="#c8102e"/><path d="M3 12.800l3.600-4.600 2 2.400 1.700-2 3.700 4.200z" fill="#c8102e"/></svg>
<svg style="left:11px;top:87.5px" width="17" height="17" viewBox="0 0 17 17"><path d="M.7 5.500V2.700a2 2 0 0 1 2-2H5.500M11.500 .7h2.800a2 2 0 0 1 2 2V5.500M16.300 11.500v2.800a2 2 0 0 1-2 2H11.500M5.500 16.300H2.700a2 2 0 0 1-2-2V11.500M7.200 .7h2.600M7.200 16.300h2.600M.7 7.200v2.600M16.300 7.200v2.600" fill="none" stroke="#7f9bea" stroke-width="1.25"/><g fill="#5b7fe0"><rect x="4" y="4" width="3.800" height="3.800"/><rect x="9.200" y="4" width="3.800" height="3.800"/><rect x="4" y="9.200" width="3.800" height="3.800"/><rect x="9.200" y="9.200" width="3.800" height="3.800"/></g></svg>
<svg style="left:0;top:0" width="0" height="0"><defs><pattern id="chk" width="1.400" height="1.400" patternUnits="userSpaceOnUse"><rect width=".7" height=".7" fill="#a31930"/><rect x=".7" y=".7" width=".7" height=".7" fill="#a31930"/></pattern></defs></svg><svg style="left:11px;top:114.5px" width="17" height="17" viewBox="0 0 17 17"><path d="M.7 5.500V2.700a2 2 0 0 1 2-2H5.500M11.500 .7h2.800a2 2 0 0 1 2 2V5.500M16.300 11.500v2.800a2 2 0 0 1-2 2H11.500M5.500 16.300H2.700a2 2 0 0 1-2-2V11.500M7.200 .7h2.600M7.200 16.300h2.600M.7 7.200v2.600M16.300 7.200v2.600" fill="none" stroke="#a31930" stroke-width="1.4"/><rect x="3.600" y="3.600" width="9.800" height="9.800" fill="#a31930" opacity=".35"/><rect x="3.600" y="3.600" width="9.800" height="9.800" fill="url(#chk)"/></svg>
<svg style="left:11px;top:141.5px" width="17" height="17" viewBox="0 0 17 17"><path d="M.7 5.500V2.700a2 2 0 0 1 2-2H5.500M11.500 .7h2.800a2 2 0 0 1 2 2V5.500M16.300 11.500v2.800a2 2 0 0 1-2 2H11.500M5.500 16.300H2.700a2 2 0 0 1-2-2V11.500M7.200 .7h2.600M7.200 16.300h2.600M.7 7.200v2.600M16.300 7.200v2.600" fill="none" stroke="#6a6a6a" stroke-width="1.25"/></svg>
<div style="left:9px;top:179px;width:21px;height:1px;background:#dcdcdc"></div>
<svg style="left:14.5px;top:201.5px" width="10" height="15" viewBox="0 0 10 15"><path d="M.6 .8v11.300l2.700-2.500 2 4.600 1.900-.8-2-4.500 3.700-.2z" fill="#3d3d3d"/></svg>
<div style="left:9px;top:238.5px;width:21px;height:1px;background:#dcdcdc"></div>
<svg style="left:10.5px;top:261.5px" width="18" height="18" viewBox="0 0 18 18"><path d="M.7 5V2.200a1.500 1.500 0 0 1 1.500-1.500H5M6.800 .7h3M11.500 .7h2.300a1.500 1.500 0 0 1 1.500 1.500V5M15.300 6.500v2M.7 6.800v3M.7 11.500v2.300a1.500 1.500 0 0 0 1.500 1.500H5M6.500 15.300h2" fill="none" stroke="#5a5a5a" stroke-width="1.200"/><rect x="8.800" y="8.800" width="8.400" height="8.400" rx=".8" fill="#3f3f3f"/><path d="M10.500 13h5" stroke="#fff" stroke-width="1.300"/><path d="M13 10.500v5" stroke="#fff" stroke-width="1.300"/></svg>
<svg style="left:10.5px;top:288.5px" width="18" height="18" viewBox="0 0 18 18"><path d="M.7 5V2.200a1.500 1.500 0 0 1 1.500-1.500H5M6.800 .7h3M11.500 .7h2.300a1.500 1.500 0 0 1 1.500 1.500V5M15.300 6.500v2M.7 6.800v3M.7 11.500v2.300a1.500 1.500 0 0 0 1.500 1.500H5M6.500 15.300h2" fill="none" stroke="#5a5a5a" stroke-width="1.200"/><rect x="8.800" y="8.800" width="8.400" height="8.400" rx=".8" fill="#3f3f3f"/><path d="M10.500 13h5" stroke="#fff" stroke-width="1.300"/></svg>
<div style="left:9px;top:325.5px;width:21px;height:1px;background:#dcdcdc"></div>
<svg style="left:10px;top:347px" width="19" height="19" viewBox="0 0 19 19"><g fill="none" stroke="#5f83ee" stroke-width="1" opacity="1"><rect x="1.250" y="1" width="15.400" height="15.400" rx="2"/><path d="M11.2 1v15.400M1.250 6.3h15.400M1.250 11.6h15.400"/></g><path d="M6 -.2v18.200" stroke="#2450d8" stroke-width="2.100"/></svg>
<svg style="left:10px;top:374.9px" width="19" height="19" viewBox="0 0 19 19"><g fill="none" stroke="#5f83ee" stroke-width="1" opacity="1"><rect x="1.250" y="1" width="15.400" height="15.400" rx="2"/><path d="M6.2 1v15.400M11.5 1v15.400M1.250 10.9h15.400"/></g><path d="M-.2 5h18.300" stroke="#2450d8" stroke-width="2.100"/></svg>
<svg style="left:10px;top:400.8px" width="19" height="19" viewBox="0 0 19 19"><g fill="none" stroke="#5f83ee" stroke-width="1"><path d="M1.250 17V3a2 2 0 0 1 2-2H14.650a2 2 0 0 1 2 2v8" stroke-dasharray="1.600 1.200"/><path d="M11.200 1v10M1.250 11.600h8.500" stroke-dasharray="1.600 1.200"/></g><path d="M6 .2v17.800M-.2 5.900h18.300" stroke="#2450d8" stroke-width="2.100"/><path d="M12 12.600l5.400 5.400M17.400 12.600l-5.400 5.400" stroke="#2450d8" stroke-width="1.900"/></svg>
<svg style="left:10px;top:428.6px" width="19" height="19" viewBox="0 0 19 19"><g fill="none" stroke="#b4c1f2" stroke-width="1" opacity="1"><rect x="1.250" y="1" width="15.400" height="15.400" rx="2"/><path d="M6 1v15.400M11.2 1v15.400M1.250 6.3h15.400M1.250 11.6h15.400"/></g><rect x="8.300" y="8.300" width="9.700" height="9.700" fill="#93a7ec"/></svg>
<svg style="left:10px;top:455.6px" width="19" height="19" viewBox="0 0 19 19"><g fill="none" stroke="#b4c1f2" stroke-width="1" opacity="1"><rect x="1.250" y="1" width="15.400" height="15.400" rx="2"/><path d="M6 1v15.400M11.2 1v15.400M1.250 6.3h15.400M1.250 11.6h15.400"/></g><rect x="7.600" y="7.600" width="11" height="11" fill="#eeeeee"/><g fill="#93a7ec"><rect x="8.600" y="8.600" width="4" height="4"/><rect x="13.700" y="8.600" width="4" height="4"/><rect x="8.600" y="13.700" width="4" height="4"/><rect x="13.700" y="13.700" width="4" height="4"/></g></svg>
</div>
<div id="main">
<div id="page">
<div style="left:22.5px;top:19.5px;width:75.3px;height:10.2px;border:1px solid #3da06e;background:#dcede3"></div>
<span class="t" id="t32" style="left:23.46px;top:20.50px;font-size:9px;font-weight:700;color:#c4122f;transform:scaleX(0.9741);transform-origin:0 50%;">www.ABBYY.com</span>
<div style="left:23px;top:32.5px;width:473px;height:1px;background:#e4e4e4"></div>
<svg style="left:23px;top:58.80000000000001px" width="144.800" height="136" viewBox="0 0 144.800 136"><defs><filter id="bl" x="-10%" y="-10%" width="120%" height="120%"><feGaussianBlur stdDeviation="1.400"/></filter><clipPath id="pc"><rect x="0" y="0" width="144.800" height="136"/></clipPath></defs>
<g clip-path="url(#pc)"><rect width="145.5" height="136" fill="#d5d0da"/><g filter="url(#bl)">
<rect x="36" y="6" width="56" height="48" fill="#dddbe8"/>
<rect x="112" y="0" width="34" height="36" fill="#ccc7d4"/>
<path d="M120 4l26 6v8l-28-8z" fill="#a39dac"/><path d="M126 28l20-6v6l-18 6z" fill="#b5afbd"/>
<path d="M0 0H28L24 18 0 30z" fill="#474050"/>
<path d="M28 0H86L82 5 24 30 18 22z" fill="#5a5261"/>
<path d="M10 14L38 0h12L12 22z" fill="#cbc6d6"/>
<path d="M42 12L88 0h10L46 22z" fill="#878091"/>
<path d="M0 30l22-6 4 10-26 12z" fill="#888192"/>
<rect x="20" y="24" width="5" height="26" fill="#65585a"/>
<path d="M20 32l26-7 1 3.500-26 7z" fill="#b9a070" opacity=".8"/><path d="M2 46l22-4v3.500l-22 5z" fill="#b9a47a" opacity=".8"/>
<path d="M2 48l62 1 1 6L2 56z" fill="#788391"/><path d="M2 47l60 1v1.500L2 49z" fill="#c6d0d8"/>
<rect x="2" y="57" width="52" height="14" fill="#c8c1ce"/>
<rect x="38" y="56" width="6" height="10" fill="#474048"/>
<rect x="48" y="60" width="30" height="36" fill="#d1ccd9"/><path d="M54 72l4-5 4 5z" fill="#3e3642"/>
<rect x="126" y="34" width="20" height="64" fill="#dad5de"/>
<path d="M122 86h24v50h-28z" fill="#d4ced7"/><path d="M127 90v44M132.500 90v44M138 90v44M143.500 90v44" stroke="#a49aa8" stroke-width=".9"/><rect x="122" y="88" width="24" height="1.500" fill="#898090"/>
<rect x="0" y="64" width="12" height="40" fill="#554a54"/>
<ellipse cx="28" cy="80" rx="20" ry="16" fill="#47302f"/><ellipse cx="42" cy="85" rx="9" ry="10" fill="#69463c"/>
<path d="M0 98C12 90 34 94 50 100L56 96 72 58 82 62 78 96 72 116 68 136H0z" fill="#5f6270"/>
<path d="M0 104c14-6 32-2 46 6l6 26H0z" fill="#535564"/>
<path d="M30 136V100" stroke="#8b8c9a" stroke-width="1"/>
<rect x="5.500" y="77" width="30" height="4.500" fill="#b97c4c" opacity=".8"/>
<rect x="56" y="104" width="26" height="32" fill="#cbc6d2"/><rect x="62" y="112" width="6" height="8" fill="#575058"/>
<path d="M79 41L100 32 118 30 135 46 134 76 127 99 95 99 92 67 82 58z" fill="#bcb6be"/>
<path d="M82 46c8-6 14 6 12 24l-1 26-9-8-2-28z" fill="#a8a1ac"/>
<path d="M117 38l15 10 2 30-9 20-10-18z" fill="#c9c4cb"/>
<path d="M98 32l14-3 1 14-7 22-8-20z" fill="#3b3540"/>
<ellipse cx="98" cy="26" rx="10.500" ry="12" fill="#98695c"/>
<path d="M86 17c0-17 27-19 32-4l2 12-6-9c-8-5-20-4-25 3z" fill="#382b32"/><ellipse cx="116" cy="19" rx="5.500" ry="8" fill="#382b32"/>
<path d="M85 25.500h23" stroke="#2a2026" stroke-width="2.200"/>
<path d="M67 42c4-4 12-2 14 4l-1 12-9 3-6-8z" fill="#885e56"/>
<path d="M82 98h44l-4 24-36 6z" fill="#5b4f58"/>
<path d="M86 120L135 97.500l4 3.500-42 24z" fill="#30272e"/>
<path d="M68 130l44-8 26 14H66z" fill="#473c45"/>
<ellipse cx="137" cy="126" rx="6.500" ry="2" fill="#473c45"/><rect x="136" y="127" width="2" height="9" fill="#473c45"/>
</g><rect width="145.5" height="136" fill="#d8466a" opacity=".07"/></g>
<rect x=".6" y=".6" width="143.600" height="134.800" fill="none" stroke="#dc4a68" stroke-width="1.200"/></svg>
<div style="left:179px;top:58.7px;width:310.6px;height:136.8px;border:1px solid #3da06e;background:#dcede3"></div>
<span class="t" id="t33" style="left:180.47px;top:59.50px;font-size:8.8px;font-weight:700;color:#2f3a37;transform:scaleX(0.9796);transform-origin:0 50%;">Next Phase of Automation: Adding Value to RPA</span>
<span class="t" id="t34" style="left:180.52px;top:75.50px;font-size:8px;color:#2f3b37;transform:scaleX(1.0180);transform-origin:0 50%;-webkit-text-stroke:.15px #2f3b37;">When combined with RPA, Content Intelligence provides the AI and cognitive</span>
<span class="t" id="t35" style="left:180.52px;top:85.50px;font-size:8px;color:#2f3b37;transform:scaleX(1.0392);transform-origin:0 50%;-webkit-text-stroke:.15px #2f3b37;">machine-learning capabilities required to assist in automating content-centric</span>
<span class="t" id="t36" style="left:180.52px;top:95.50px;font-size:8px;color:#2f3b37;transform:scaleX(1.0390);transform-origin:0 50%;-webkit-text-stroke:.15px #2f3b37;">processes. It helps organizations transform their operations, dramatically improve</span>
<span class="t" id="t37" style="left:180.52px;top:105.50px;font-size:8px;color:#2f3b37;transform:scaleX(1.0357);transform-origin:0 50%;-webkit-text-stroke:.15px #2f3b37;">the customer experience, and significantly reduce operating costs. This use of</span>
<span class="t" id="t38" style="left:180.52px;top:116.50px;font-size:8px;color:#2f3b37;transform:scaleX(1.0316);transform-origin:0 50%;-webkit-text-stroke:.15px #2f3b37;">advanced capture technology can provide detailed insights into content which can</span>
<span class="t" id="t39" style="left:180.52px;top:125.50px;font-size:8px;color:#2f3b37;transform:scaleX(1.0395);transform-origin:0 50%;-webkit-text-stroke:.15px #2f3b37;">then be used to better manage individual transactions, as well as, formulate new</span>
<span class="t" id="t40" style="left:180.52px;top:136.50px;font-size:8px;color:#2f3b37;transform:scaleX(1.0364);transform-origin:0 50%;-webkit-text-stroke:.15px #2f3b37;">business strategies for competitive advantage when implemented across thousands</span>
<span class="t" id="t41" style="left:180.52px;top:146.50px;font-size:8px;color:#2f3b37;transform:scaleX(1.0581);transform-origin:0 50%;-webkit-text-stroke:.15px #2f3b37;">of transactions.</span>
<span class="t" id="t42" style="left:180.52px;top:166.50px;font-size:8px;color:#2f3b37;transform:scaleX(1.0382);transform-origin:0 50%;-webkit-text-stroke:.15px #2f3b37;">Content intelligence is helping transform business at all levels of RPA starting with</span>
<span class="t" id="t43" style="left:180.52px;top:176.50px;font-size:8px;color:#2f3b37;transform:scaleX(1.0444);transform-origin:0 50%;-webkit-text-stroke:.15px #2f3b37;">the most basic automation robots all the way to designing robots that automate</span>
<span class="t" id="t44" style="left:180.52px;top:187.50px;font-size:8px;color:#2f3b37;transform:scaleX(1.0340);transform-origin:0 50%;-webkit-text-stroke:.15px #2f3b37;">tasks involving more intuition, judgement, and problem solving.</span>
<div style="left:0px;top:233.1px;width:520px;height:48.4px;background:#17325c;border-top:1px solid #6b3050;border-bottom:1px solid #6b3050"></div>
<div style="left:123.3px;top:242.3px;width:274px;height:29.4px;border:1px solid #2a7d5c;background:#1d3e5c"></div>
<span class="t" id="t45" style="left:124.44px;top:245.50px;font-size:9.3px;font-weight:700;color:#eef1f6;transform:scaleX(1.0821);transform-origin:0 50%;">RPA + Content Intelligence: Transforming Your Business</span>
<span class="t" id="t46" style="left:140.44px;top:259.50px;font-size:9.4px;color:#dfe5ee;transform:scaleX(1.1391);transform-origin:0 50%;">Unlock the value of content and digitize processes</span>
<div style="left:0px;top:281.5px;width:520px;height:334.7px;background:#e0e3f0"></div>
<div style="left:23px;top:298.5px;width:473.5px;height:311.5px;background:#c4cef0"></div>
<div style="left:24px;top:299.5px;width:235.5px;height:44.5px;background:#a8bbee"></div>
<div style="left:24px;top:388.1px;width:231px;height:33.9px;background:#d3dcf4"></div>
<div style="left:264.6px;top:388.1px;width:230.4px;height:33.9px;background:#d3dcf4"></div>
<div style="left:24px;top:460.5px;width:231px;height:35.5px;background:#d3dcf4"></div>
<div style="left:264.6px;top:460.5px;width:230.4px;height:35.5px;background:#d3dcf4"></div>
<div style="left:24px;top:532.5px;width:231px;height:35.5px;background:#d3dcf4"></div>
<div style="left:264.6px;top:532.5px;width:230.4px;height:35.5px;background:#d3dcf4"></div>
<svg style="left:113px;top:297.5px" width="56" height="48" viewBox="628 402 56 48"><g fill="none" stroke="#7283b2" stroke-width="1.500"><path d="M661.300 405.300C668 405 672.500 408 673.300 412.500C673.800 416 674.500 418.500 675.300 421.100L678.800 427C679 428.300 677 429 674 429.500L673.500 437.200C673.300 438.600 672.300 439 671.100 439L663.700 439.300V447H642.500"/><path d="M642.700 441.400V447" /><path d="M643.800 405.300h1.200M648.300 405.300h1.200M653 405.300h1.200M643.800 435.800h1M653.200 435.800h1" stroke-width="1"/></g>
<g fill="none" stroke="#1b3f8b" stroke-width="2"><path d="M642.400 411.600H656.700V428.800H642.400"/><path d="M643.800 408.500V411.600M648.300 408.500V411.600M653.200 408.500V411.600M656.700 415.800H660.600M656.700 420.400H660.600M643.800 428.800V432.300M653.200 428.800V432.300"/><path d="M656.700 424.900H664.300Q666.700 424.900 666.700 422.500V417"/><path d="M648.300 428.800V438Q648.300 440.400 650.800 440.400H653.800"/></g><circle cx="666.700" cy="414.800" r="1.800" fill="#a8bbee" stroke="#1b3f8b" stroke-width="1.500"/><circle cx="656" cy="440.500" r="1.800" fill="#a8bbee" stroke="#1b3f8b" stroke-width="1.500"/>
<text x="632.300" y="424.300" font-family="Liberation Sans, sans-serif" font-weight="700" font-size="11" textLength="21.300" lengthAdjust="spacingAndGlyphs" fill="#1b3f8b" stroke="#1b3f8b" stroke-width=".3">RPA</text></svg>
<svg style="left:353px;top:295.5px" width="54" height="54" viewBox="868 400 54 54"><path d="M892.200 413.400L903.400 419.700V432.300L892.200 438.600L881 432.300V419.700z" fill="none" stroke="#7a84a8" stroke-width="1.800"/><g fill="none" stroke="#1a3566" stroke-width="1.800"><path d="M892.200 406V413M876.600 426.500H880M904 426.700H910Q912.800 426.700 913.200 424V422M908 426.700V434Q908 436.600 910.500 436.600H912.700M892.200 439.300V446.500Q892.200 449.400 895 449.400H897"/></g><g fill="#c4cef0" stroke="#1a3566" stroke-width="1.300"><circle cx="892.300" cy="404.300" r="1.600"/><circle cx="874.700" cy="426.500" r="1.700"/><circle cx="913.200" cy="420.200" r="1.700"/><circle cx="914.700" cy="436.600" r="1.700"/><circle cx="898.800" cy="449.400" r="1.700"/></g>
<text x="887.800" y="430.400" font-family="Liberation Sans, sans-serif" font-weight="700" font-size="13" textLength="9.400" lengthAdjust="spacingAndGlyphs" fill="#1a3566" stroke="#1a3566" stroke-width=".25">Ci</text></svg>
<div style="left:23px;top:343.5px;width:473.5px;height:1px;background:#2b5fe2"></div>
<div style="left:23px;top:378.5px;width:473.5px;height:1px;background:#2b5fe2"></div>
<div style="left:23px;top:423.5px;width:473.5px;height:1px;background:#2b5fe2"></div>
<div style="left:23px;top:459.5px;width:473.5px;height:1px;background:#2b5fe2"></div>
<div style="left:23px;top:495.5px;width:473.5px;height:1px;background:#2b5fe2"></div>
<div style="left:23px;top:531.5px;width:473.5px;height:1px;background:#2b5fe2"></div>
<div style="left:23px;top:567.5px;width:473.5px;height:1px;background:#2b5fe2"></div>
<div style="left:259px;top:298.5px;width:1px;height:311.5px;background:#3f6cd6"></div>
<div style="left:22px;top:297.5px;width:475.4px;height:314px;border:2px solid #1349e4;border-left-color:#2250c4;border-right-color:#2250c4"></div>
<div style="left:19px;top:294.5px;width:7px;height:7px;background:#1f50e0"></div>
<div style="left:493px;top:294.5px;width:7px;height:7px;background:#1f50e0"></div>
<div style="left:19px;top:606.5px;width:7px;height:7px;background:#1f50e0"></div>
<div style="left:493px;top:606.5px;width:7px;height:7px;background:#1f50e0"></div>
<span class="t" id="t47" style="left:78.16px;top:358.50px;font-size:9px;font-weight:700;color:#39425f;transform:scaleX(0.9745);transform-origin:0 50%;">Robotic Process Automation</span>
<span class="t" id="t48" style="left:338.46px;top:358.50px;font-size:9px;font-weight:700;color:#39425f;transform:scaleX(0.9934);transform-origin:0 50%;">Content Intelligence</span>
<span class="t" id="t49" style="left:76.12px;top:402.50px;font-size:8px;color:#4f5a78;transform:scaleX(1.0009);transform-origin:0 50%;">Helps overcome system and process limitations</span>
<span class="t" id="t50" style="left:110.12px;top:438.50px;font-size:8px;color:#4f5a78;transform:scaleX(0.9985);transform-origin:0 50%;">Non-invasively mimics users’ activities</span>
<span class="t" id="t51" style="left:108.22px;top:469.50px;font-size:8px;color:#4f5a78;transform:scaleX(1.0037);transform-origin:0 50%;">Process structured data from systems,</span>
<span class="t" id="t52" style="left:153.42px;top:479.50px;font-size:8px;color:#4f5a78;transform:scaleX(1.0021);transform-origin:0 50%;">spreadsheets, documents</span>
<span class="t" id="t53" style="left:152.62px;top:511.50px;font-size:8px;color:#4f5a78;transform:scaleX(1.0058);transform-origin:0 50%;">Automation is rules based</span>
<span class="t" id="t54" style="left:176.32px;top:546.50px;font-size:8px;color:#4f5a78;transform:scaleX(0.9934);transform-origin:0 50%;">Highly deterministic</span>
<span class="t" id="t55" style="left:100.12px;top:583.50px;font-size:8px;color:#4f5a78;transform:scaleX(0.9918);transform-origin:0 50%;">General employee assisted digital worker</span>
<span class="t" id="t56" style="left:273.92px;top:397.50px;font-size:8px;color:#4f5a78;transform:scaleX(0.9981);transform-origin:0 50%;">Provides understanding of content associated with</span>
<span class="t" id="t57" style="left:273.92px;top:408.50px;font-size:8px;color:#4f5a78;transform:scaleX(1.0155);transform-origin:0 50%;">the process</span>
<span class="t" id="t58" style="left:273.92px;top:433.50px;font-size:8px;color:#4f5a78;transform:scaleX(1.0002);transform-origin:0 50%;">Mimics human thought process through vision,</span>
<span class="t" id="t59" style="left:273.92px;top:443.50px;font-size:8px;color:#4f5a78;transform:scaleX(0.9951);transform-origin:0 50%;">language, and pattern detection</span>
<span class="t" id="t60" style="left:273.92px;top:469.50px;font-size:8px;color:#4f5a78;transform:scaleX(0.9961);transform-origin:0 50%;">Process structured, semi-structured, and</span>
<span class="t" id="t61" style="left:273.92px;top:479.50px;font-size:8px;color:#4f5a78;transform:scaleX(1.0104);transform-origin:0 50%;">unstructured content</span>
<span class="t" id="t62" style="left:273.92px;top:505.50px;font-size:8px;color:#4f5a78;transform:scaleX(0.9936);transform-origin:0 50%;">Supervised learning of documents, and improves over</span>
<span class="t" id="t63" style="left:273.92px;top:515.50px;font-size:8px;color:#4f5a78;transform:scaleX(1.0081);transform-origin:0 50%;">time based on human input</span>
<span class="t" id="t64" style="left:273.92px;top:541.50px;font-size:8px;color:#4f5a78;transform:scaleX(1.0003);transform-origin:0 50%;">Applies learning, but can also have safeguards built in</span>
<span class="t" id="t65" style="left:273.92px;top:552.50px;font-size:8px;color:#4f5a78;transform:scaleX(0.9978);transform-origin:0 50%;">that involve humans</span>
<span class="t" id="t66" style="left:273.92px;top:583.50px;font-size:8px;color:#4f5a78;transform:scaleX(1.0006);transform-origin:0 50%;">Highly skilled digital worker with understanding of content</span>
<div style="left:23.3px;top:645.5px;width:6.9px;height:9.6px;border:1px solid #3da06e;background:#e4f1ea"></div>
<span class="t" id="t67" style="left:24.88px;top:647.50px;font-size:7px;color:#444;letter-spacing:-0.356px;">7</span>
<div style="left:108px;top:645.5px;width:389px;height:9.6px;border:1px solid #3da06e;background:#e4f1ea"></div>
<span class="t" id="t68" style="left:109.38px;top:646.50px;font-size:7px;font-weight:700;color:#2f3a37;transform:scaleX(0.9307);transform-origin:0 50%;">New Technologies Give Rise to Content Intelligence</span>
<span class="t" id="t69" style="left:272.28px;top:646.50px;font-size:7px;color:#3f4a47;transform:scaleX(0.9693);transform-origin:0 50%;">| Industry Insight Into How Content Intelligence Powers Robotic Processes</span>
</div>
</div>
</div>
</body></html>
